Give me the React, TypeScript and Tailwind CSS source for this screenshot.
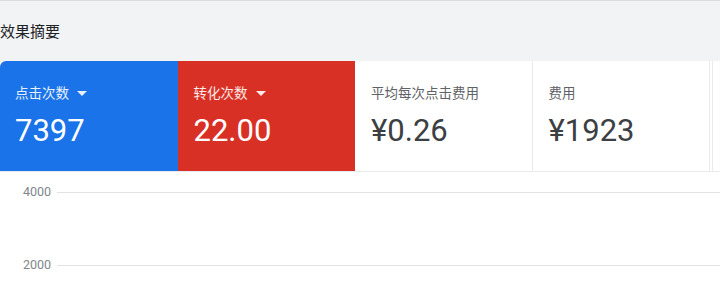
const cards = [
  { label: "点击次数", value: "7397", bg: "bg-[#1a73e8]", text: "text-white", sub: "text-white/90", arrow: true, first: true },
  { label: "转化次数", value: "22.00", bg: "bg-[#d93025]", text: "text-white", sub: "text-white/90", arrow: true },
  { label: "平均每次点击费用", value: "¥0.26", bg: "bg-white border-r border-[#e8eaed]", text: "text-[#3c4043]", sub: "text-[#5f6368]" },
  { label: "费用", value: "¥1923", bg: "bg-white border-r border-[#e8eaed]", text: "text-[#3c4043]", sub: "text-[#5f6368]" },
];

export default function App() {
  return (
    <div className="h-[306px] w-[720px] overflow-hidden bg-white font-['Roboto','Noto_Sans_CJK_SC',sans-serif]">
      <div className="flex h-[61px] items-center border-t border-[#dadce0] bg-[#f1f3f4] pt-[2px]">
        <h1 className="text-[15px] text-[#202124]">效果摘要</h1>
      </div>

      <div className="flex h-[111px] border-b border-[#e8eaed]">
        {cards.map((c) => (
          <div
            key={c.label}
            className={`flex w-[177.5px] shrink-0 flex-col pl-4 pt-[24px] ${c.bg} ${c.first ? "rounded-tl-[6px] pl-[15px]" : ""}`}
          >
            <div className={`flex items-center gap-2 text-[13.5px] leading-[16px] ${c.sub}`}>
              <span>{c.label}</span>
              {c.arrow && (
                <svg width="10" height="5" viewBox="0 0 10 5" className="mt-[1px]">
                  <path d="M0 0h10L5 5z" fill="currentColor" />
                </svg>
              )}
            </div>
            <div className={`mt-[10px] text-[31px] leading-[40px] ${c.text}`}>{c.value}</div>
          </div>
        ))}
        <div className="ml-[2px] flex-1 border-l border-[#e8eaed] bg-white" />
      </div>

      <div className="flex flex-col gap-[53px] pt-[10px]">
        <div className="flex h-[20px] items-center">
          <span className="w-[51px] text-right text-[12.5px] text-[#80868b]">4000</span>
          <div className="ml-[6px] flex-1 border-t border-[#e3e3e3]" />
        </div>
        <div className="flex h-[20px] items-center">
          <span className="w-[51px] text-right text-[12.5px] text-[#80868b]">2000</span>
          <div className="ml-[6px] flex-1 border-t border-[#e3e3e3]" />
        </div>
      </div>
    </div>
  );
}
